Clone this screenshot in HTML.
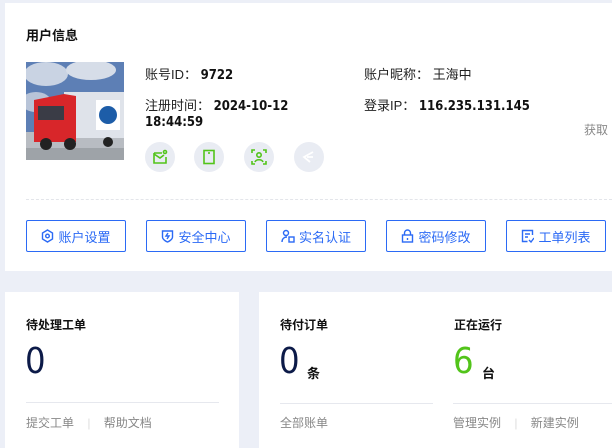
<!DOCTYPE html>
<html><head><meta charset="utf-8"><style>
*{margin:0;padding:0;box-sizing:border-box}
body{width:612px;height:448px;overflow:hidden;background:#eceff7;font-family:"Liberation Sans","Noto Sans CJK SC",sans-serif;position:relative;color:#0f1b3d}
.card{position:absolute;background:#fff}
.abs{position:absolute;white-space:nowrap}
.t{font-size:12px;font-weight:bold;color:#111}
.lbl{font-size:13px;color:#222}
.val{font-size:13px;font-weight:bold;color:#111;font-family:"DejaVu Sans Condensed","Liberation Sans",sans-serif}
.ic{position:absolute;width:30px;height:30px;border-radius:50%;background:#e9ecf3;top:142px}
.ic svg{position:absolute;left:7px;top:7px}
.btn{position:absolute;top:220px;width:100px;height:32px;border:1px solid #2b6af5;border-radius:2px;color:#2b6af5;font-size:13px;display:flex;align-items:center;justify-content:center;gap:4px}
.big{font-size:36px;color:#0c1a48;font-family:"DejaVu Sans Condensed","Liberation Sans",sans-serif}
.hr{position:absolute;height:1px;background:#e6e8ee}
.lnk{font-size:12px;color:#888}
</style></head><body>
<div class="card" style="left:5px;top:3px;width:607px;height:268px"></div>
<div class="abs t" style="left:26px;top:25px;font-size:13px">用户信息</div>
<svg class="abs" style="left:26px;top:62px" width="98" height="98" viewBox="0 0 98 98">
<rect width="98" height="98" fill="#5d7fb5"/>
<ellipse cx="20" cy="12" rx="22" ry="12" fill="#c9d3e3"/><ellipse cx="65" cy="8" rx="25" ry="10" fill="#d6dde8"/><ellipse cx="10" cy="40" rx="15" ry="10" fill="#b8c4d8"/>
<rect y="70" width="98" height="28" fill="#b8bcc2"/><rect y="86" width="98" height="12" fill="#9ea3a8"/>
<rect x="38" y="30" width="60" height="46" fill="#dfe3ea"/>
<rect x="70" y="38" width="24" height="30" fill="#fff"/><ellipse cx="82" cy="53" rx="9" ry="9" fill="#1d5da8"/>
<path d="M8 38 L38 32 L50 34 L50 80 L8 80 Z" fill="#d8262a"/><rect x="12" y="44" width="26" height="14" fill="#3a3c46"/>
<circle cx="20" cy="82" r="6" fill="#222"/><circle cx="44" cy="82" r="6" fill="#222"/><circle cx="82" cy="80" r="5" fill="#222"/>
</svg>
<div class="abs lbl" style="left:145px;top:64px">账号ID：&nbsp;<span class="val">9722</span></div>
<div class="abs lbl" style="left:364px;top:64px">账户昵称：&nbsp;王海中</div>
<div class="abs lbl" style="left:145px;top:95px">注册时间：&nbsp;<span class="val">2024-10-12</span></div>
<div class="abs val" style="left:145px;top:115px">18:44:59</div>
<div class="abs lbl" style="left:364px;top:95px">登录IP：&nbsp;<span class="val">116.235.131.145</span></div>
<div class="abs" style="left:584px;top:121px;font-size:12px;color:#888">获取</div>
<div class="ic" style="left:145px"><svg width="16" height="16" fill="none" stroke="#52c41a" stroke-width="1.6"><path d="M2 4h8M2 4v10h12V8M2 5l6 4 4-3"/><circle cx="13" cy="3" r="1.5"/></svg></div>
<div class="ic" style="left:194px"><svg width="16" height="16" fill="none" stroke="#52c41a" stroke-width="1.6"><rect x="3" y="1.5" width="10" height="13"/><path d="M7 4h2"/></svg></div>
<div class="ic" style="left:244px"><svg width="16" height="16" fill="none" stroke="#52c41a" stroke-width="1.6"><path d="M1 4V1h3M12 1h3v3M1 12v3h3M15 12v3h-3"/><circle cx="8" cy="6" r="2.2"/><path d="M4 13c1-3 7-3 8 0"/></svg></div>
<div class="ic" style="left:294px"><svg width="16" height="16" fill="none" stroke="#fff" stroke-width="1.8"><path d="M12 3L3 8l6 5M6 8h6"/></svg></div>
<div class="abs" style="left:26px;top:199px;width:586px;border-top:1px dashed #e3e5ea"></div>
<div class="btn" style="left:26px"><svg width="13" height="14" fill="none" stroke="#2b6af5" stroke-width="1.4"><path d="M6.5 1l5 3v6l-5 3-5-3V4z"/><circle cx="6.5" cy="7" r="1.8"/></svg>账户设置</div>
<div class="btn" style="left:146px"><svg width="13" height="14" fill="none" stroke="#2b6af5" stroke-width="1.4"><path d="M1.5 2h10v6c0 3-5 5-5 5s-5-2-5-5z"/><path d="M7 4l-2 3h3l-2 3"/></svg>安全中心</div>
<div class="btn" style="left:266px"><svg width="14" height="14" fill="none" stroke="#2b6af5" stroke-width="1.4"><circle cx="5" cy="4" r="2.5"/><path d="M1 13c0-4 3-5 5-5"/><rect x="8" y="8" width="5" height="5"/></svg>实名认证</div>
<div class="btn" style="left:386px"><svg width="13" height="14" fill="none" stroke="#2b6af5" stroke-width="1.4"><rect x="1.5" y="6" width="10" height="7"/><path d="M3.5 6V4a3 3 0 016 0v2M6.5 9v2"/></svg>密码修改</div>
<div class="btn" style="left:506px"><svg width="13" height="14" fill="none" stroke="#2b6af5" stroke-width="1.4"><path d="M11.5 6V1.5h-10v11h5M4 5h5M4 8h3M8 11l2 2 3-4"/></svg>工单列表</div>

<div class="card" style="left:5px;top:292px;width:234px;height:156px"></div>
<div class="card" style="left:259px;top:292px;width:353px;height:156px"></div>
<div class="abs t" style="left:26px;top:316px">待处理工单</div>
<div class="abs big" style="left:25px;top:341px">0</div>
<div class="hr" style="left:26px;top:402px;width:193px"></div>
<div class="abs lnk" style="left:26px;top:414px">提交工单 <span style="color:#ddd;margin:0 10px">|</span> 帮助文档</div>
<div class="abs t" style="left:280px;top:316px">待付订单</div>
<div class="abs big" style="left:279px;top:341px">0</div>
<div class="abs t" style="left:307px;top:363px;font-size:13px">条</div>
<div class="hr" style="left:280px;top:403px;width:153px"></div>
<div class="abs lnk" style="left:280px;top:414px">全部账单</div>
<div class="abs t" style="left:454px;top:316px">正在运行</div>
<div class="abs big" style="left:453px;top:341px;color:#52c41a">6</div>
<div class="abs t" style="left:482px;top:363px;font-size:13px">台</div>
<div class="hr" style="left:453px;top:403px;width:159px"></div>
<div class="abs lnk" style="left:453px;top:414px">管理实例 <span style="color:#ddd;margin:0 10px">|</span> 新建实例</div>
</body></html>
